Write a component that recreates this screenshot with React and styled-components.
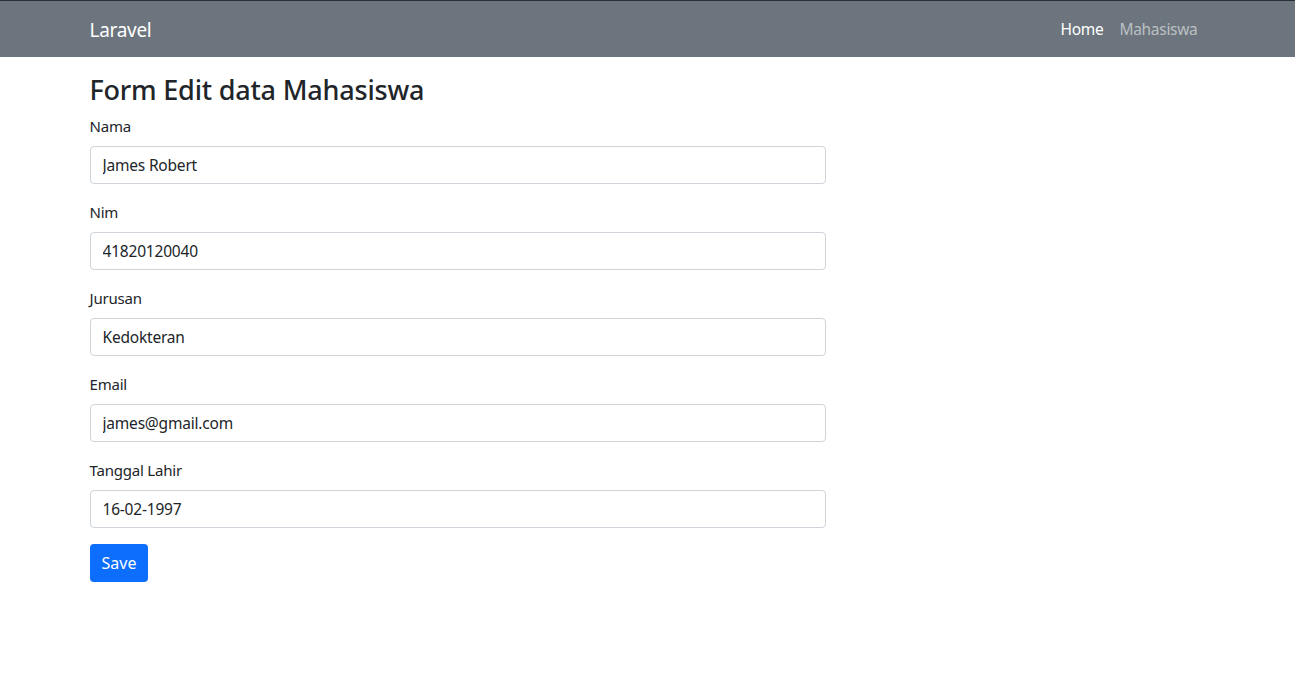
import styled, { createGlobalStyle } from "styled-components";

const GlobalStyle = createGlobalStyle`
  * {
    box-sizing: border-box;
  }

  body {
    margin: 0;
    background: #ffffff;
    color: #212529;
    font-family: "Noto Sans", "Open Sans", sans-serif;
    font-size: 16px;
    line-height: 1.5;
  }
`;

const StyledNavbar = styled.nav`
  height: 57px;
  border-top: 1px solid #2b3035;
  background-color: #6c757d;
`;

const StyledContainer = styled.div`
  width: 1140px;
  margin: 0 auto;
  padding: 0 12px;
`;

const StyledNavInner = styled(StyledContainer)`
  height: 100%;
  padding-top: 2px;
  display: flex;
  align-items: center;
  justify-content: space-between;
`;

const StyledBrand = styled.a`
  font-size: 19px;
  line-height: 30px;
  color: #ffffff;
  text-decoration: none;
  letter-spacing: -0.3px;
`;

const StyledNavList = styled.div`
  display: flex;
`;

const StyledNavLink = styled.a`
  padding: 8px;
  font-size: 15.5px;
  letter-spacing: -0.3px;
  color: ${(props) => (props.$active ? "#ffffff" : "rgba(255, 255, 255, 0.55)")};
  text-decoration: none;
`;

const StyledMain = styled(StyledContainer)`
  padding-top: 16px;
`;

const StyledTitle = styled.h3`
  margin: 0 0 8px;
  font-size: 27px;
  font-weight: 500;
  line-height: 33px;
  letter-spacing: -0.2px;
`;

const StyledForm = styled.form`
  width: 736px;
`;

const StyledField = styled.div`
  margin-bottom: 16px;
`;

const StyledLabel = styled.label`
  display: block;
  margin-bottom: 8px;
  font-size: 15px;
  line-height: 24px;
  letter-spacing: -0.2px;
`;

const StyledInput = styled.input`
  display: block;
  width: 100%;
  height: 38px;
  padding: 6px 12px;
  border: 1px solid #ced4da;
  border-radius: 4px;
  font-family: inherit;
  font-size: 15.5px;
  letter-spacing: -0.2px;
  color: #212529;
  background: #ffffff;
`;

const StyledButton = styled.button`
  height: 38px;
  padding: 6px 12px;
  border: 0;
  border-radius: 4px;
  background-color: #0d6efd;
  color: #ffffff;
  font-family: inherit;
  font-size: 16px;
  cursor: pointer;
`;

const fields = [
  { label: "Nama", value: "James Robert" },
  { label: "Nim", value: "41820120040" },
  { label: "Jurusan", value: "Kedokteran" },
  { label: "Email", value: "james@gmail.com" },
  { label: "Tanggal Lahir", value: "16-02-1997" },
];

const App = () => {
  return (
    <>
      <GlobalStyle />
      <StyledNavbar>
        <StyledNavInner>
          <StyledBrand href="#">Laravel</StyledBrand>
          <StyledNavList>
            <StyledNavLink href="#" $active>
              Home
            </StyledNavLink>
            <StyledNavLink href="#">Mahasiswa</StyledNavLink>
          </StyledNavList>
        </StyledNavInner>
      </StyledNavbar>

      <StyledMain>
        <StyledTitle>Form Edit data Mahasiswa</StyledTitle>
        <StyledForm onSubmit={(e) => e.preventDefault()}>
          {fields.map((field) => (
            <StyledField key={field.label}>
              <StyledLabel>{field.label}</StyledLabel>
              <StyledInput type="text" defaultValue={field.value} />
            </StyledField>
          ))}
          <StyledButton type="submit">Save</StyledButton>
        </StyledForm>
      </StyledMain>
    </>
  );
};

export default App;
